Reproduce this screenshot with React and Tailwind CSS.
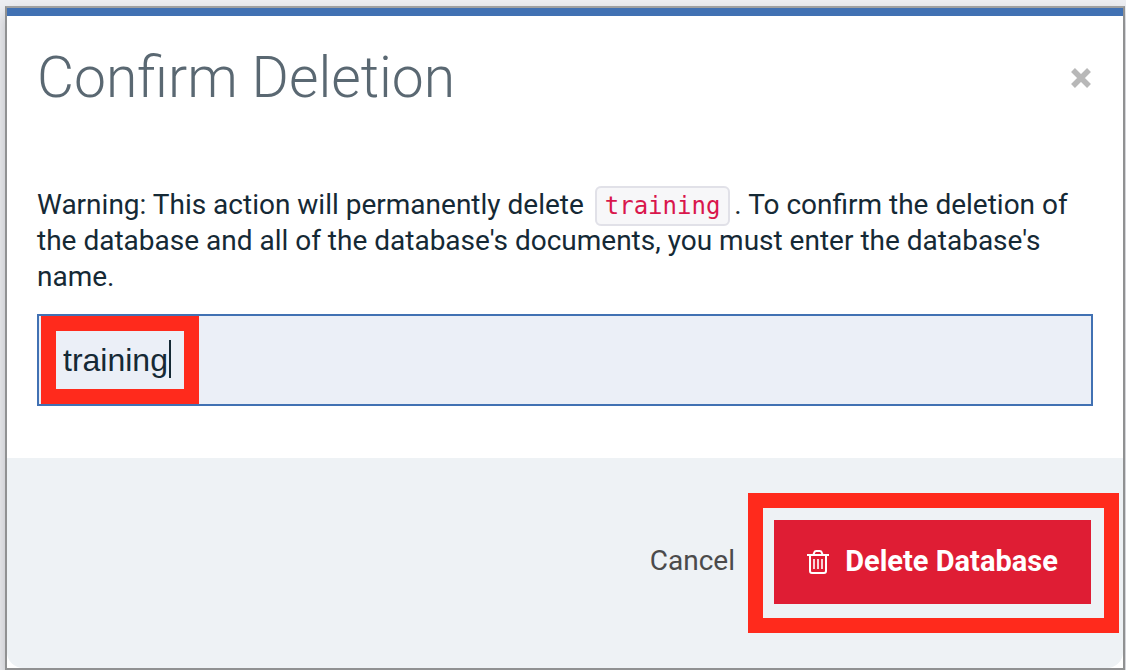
import { useState } from "react";

function TrashIcon() {
  return (
    <svg aria-hidden="true" className="h-6 w-[22px] shrink-0" viewBox="0 0 22 24" fill="none" stroke="currentColor" strokeWidth="2">
      <path d="M0 5h22" />
      <path d="M6.500 4.500L7.300 2.400a2 2 0 0 1 1.900-1.400h3.600a2 2 0 0 1 1.900 1.400l.8 2.100" />
      <path d="M3 5v16a2 2 0 0 0 2 2h12a2 2 0 0 0 2-2V5" />
      <path d="M7 9v10M11 9v10M15 9v10" strokeWidth="1.600" />
    </svg>
  );
}

function CloseIcon() {
  return (
    <svg aria-hidden="true" className="h-5 w-5" viewBox="0 0 20 20" fill="none" stroke="currentColor" strokeWidth="5.500">
      <path d="M2 2l16 16M18 2L2 18" />
    </svg>
  );
}

export default function App() {
  const [name, setName] = useState("training");

  return (
    <main className="flex min-h-screen flex-col overflow-hidden bg-[#edeef2] pt-1.5 pr-px pl-[5px] font-['Roboto','Noto_Sans',sans-serif]">
      <section
        role="dialog"
        aria-labelledby="dialog-title"
        className="flex grow flex-col border-2 border-[#909192] border-t-[#9fa0a1] bg-white shadow-[0_8px_14px_rgba(0,0,0,0.22)]"
      >
        <div className="h-2 bg-[#4171b3]" />
        <header className="flex items-center justify-between pt-7 pr-8 pl-[30px]">
          <h1 id="dialog-title" className="text-[57px] leading-[68px] font-light text-[#5a6872]">
            Confirm Deletion
          </h1>
          <button type="button" aria-label="Close" className="text-[#b8b8b8]">
            <CloseIcon />
          </button>
        </header>
        <div className="px-[30px] pt-[75px] pb-[52px]">
          <label htmlFor="database-name" className="block text-[28px] leading-9 text-[#152935]">
            Warning: This action will permanently delete{" "}
            <code className="mx-1 rounded-md border-2 border-[#e1e1e8] bg-[#f7f7f9] px-2 py-1 font-['DejaVu_Sans_Mono',monospace] text-2xl leading-8 text-[#d9164c]">
              training
            </code>
            . To confirm the deletion of the database and all of the database's documents, you must enter the database's name.
          </label>
          <div className="relative mt-[19px]">
            <input
              id="database-name"
              type="text"
              value={name}
              onChange={(event) => setName(event.target.value)}
              className="block h-[92px] w-full border-2 border-[#4171b3] bg-[#ebeff7] px-6 font-['Liberation_Sans',Arial,sans-serif] text-[32px] text-[#152935] outline-none"
            />
            <span className="pointer-events-none absolute top-[26px] left-[132px] h-[38px] w-0.5 bg-[#152935]" />
            <span className="pointer-events-none absolute top-0.5 left-1 h-[88px] w-[158px] border-[15px] border-[#ff2a1c]" />
          </div>
        </div>
        <footer className="flex grow items-start justify-end gap-[39px] rounded-b-2xl bg-[#eef2f5] pt-[62px] pr-8 pb-16">
          <button type="button" className="h-[82px] text-[28px] text-[#4b4b4b]">
            Cancel
          </button>
          <div className="relative">
            <button type="button" className="flex h-[84px] w-[317px] items-center justify-center gap-4 bg-[#df1d34] text-[29px] font-bold text-white">
              <TrashIcon />
              Delete Database
            </button>
            <span className="pointer-events-none absolute -top-[27px] -right-7 -bottom-[29px] -left-[26px] border-[15px] border-[#ff2a1c]" />
          </div>
        </footer>
      </section>
    </main>
  );
}
